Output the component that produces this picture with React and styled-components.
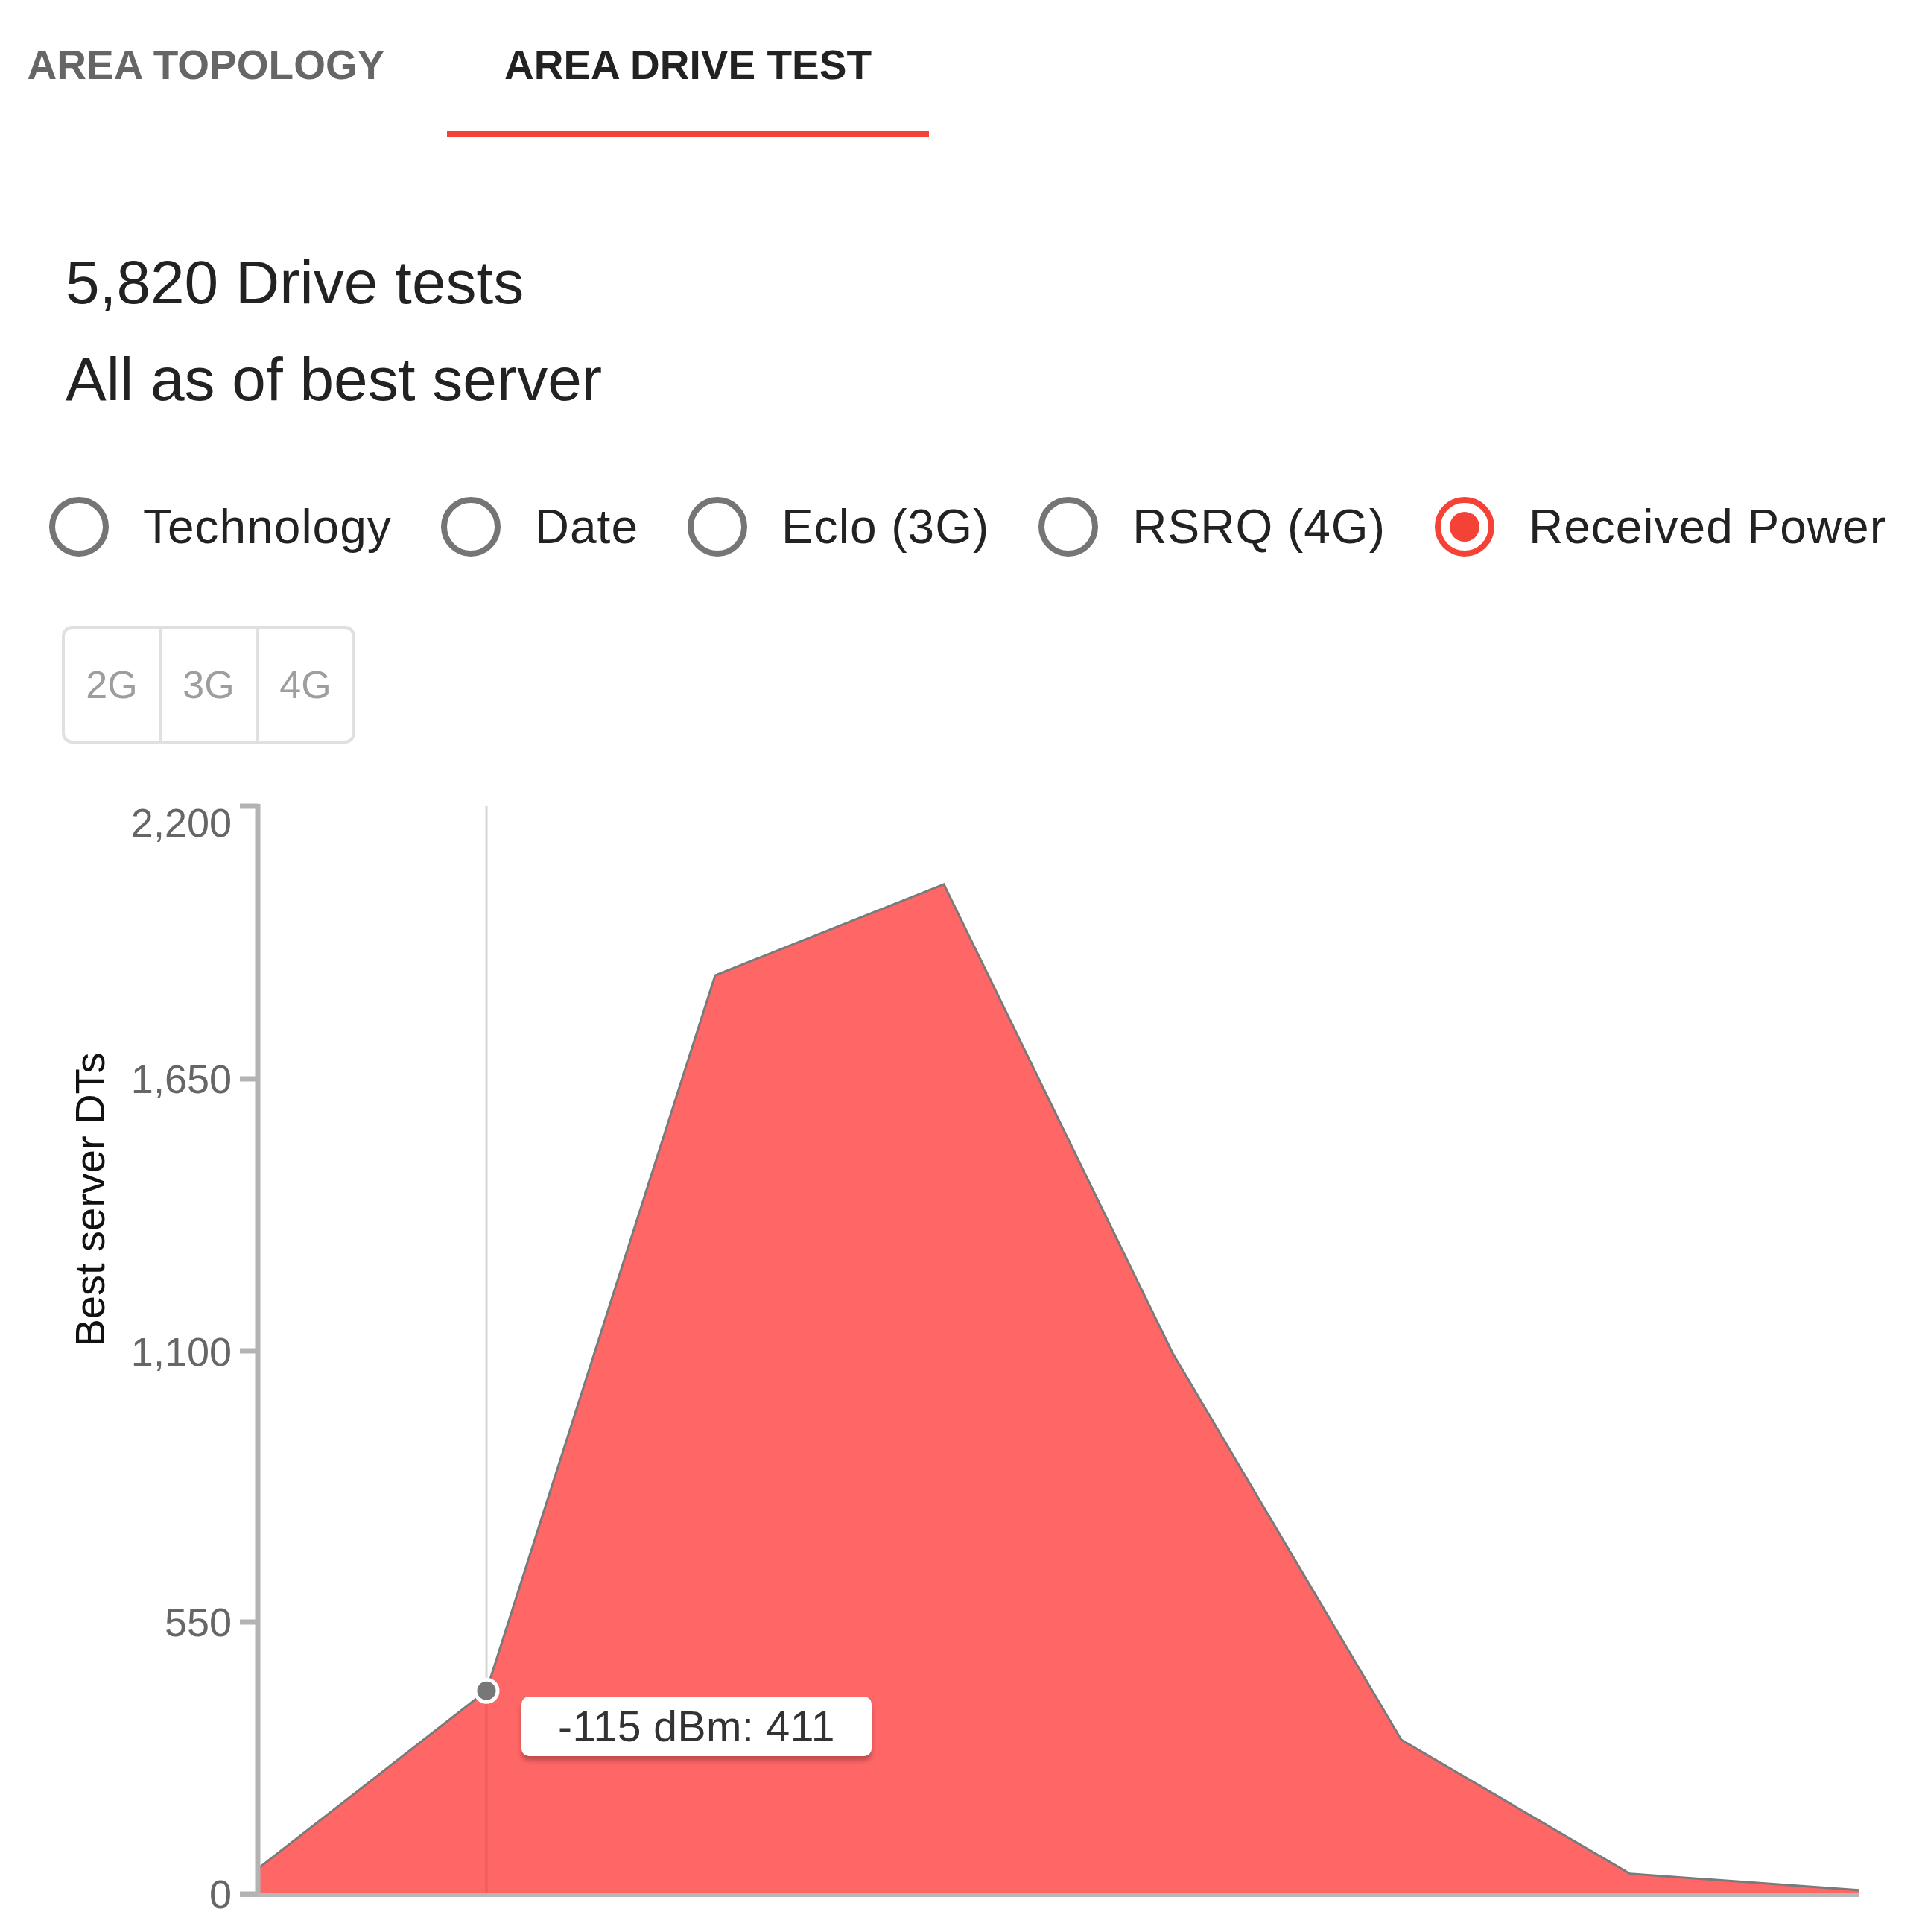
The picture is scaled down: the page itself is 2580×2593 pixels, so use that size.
import styled, { createGlobalStyle } from 'styled-components';

const GlobalStyle = createGlobalStyle`
  html, body {
    margin: 0;
    padding: 0;
    background: #fff;
  }
  body {
    font-family: "Liberation Sans", Arial, sans-serif;
  }
`;

const Page = styled.div`
  width: 2580px;
  height: 2593px;
  overflow: hidden;
  background: #fff;
`;

const TabBar = styled.div`
  display: flex;
  height: 184px;
  margin-left: -47px;
`;

const Tab = styled.div`
  position: relative;
  width: 647px;
  display: flex;
  align-items: center;
  justify-content: center;
  padding-bottom: 10px;
  box-sizing: border-box;
  font-size: 55px;
  font-weight: 700;
  text-transform: uppercase;
  color: ${(p) => (p.$active ? '#222' : '#666')};
  cursor: pointer;
`;

const Indicator = styled.span`
  position: absolute;
  left: 0;
  right: 0;
  bottom: 0;
  height: 8px;
  background: #f44336;
`;

const Summary = styled.div`
  margin-top: 130px;
  padding-left: 88px;
  font-size: 82px;
  line-height: 130px;
  color: #222;
`;

const RadioRow = styled.div`
  display: flex;
  align-items: center;
  height: 80px;
  margin-top: 93px;
  padding-left: 66px;
`;

const RadioItem = styled.label`
  display: flex;
  align-items: center;
  margin-right: 66px;
  font-size: 64px;
  letter-spacing: 1px;
  color: #222;
  white-space: nowrap;
`;

const RadioCircle = styled.span`
  width: 80px;
  height: 80px;
  box-sizing: border-box;
  border-radius: 50%;
  border: 8px solid ${(p) => (p.$checked ? '#f44336' : '#757575')};
  margin-right: 46px;
  display: flex;
  align-items: center;
  justify-content: center;
  flex-shrink: 0;
`;

const RadioDot = styled.span`
  width: 40px;
  height: 40px;
  border-radius: 50%;
  background: #f44336;
`;

const ToggleGroup = styled.div`
  display: inline-flex;
  margin: 93px 0 0 83px;
  border: 4px solid #e0e0e0;
  border-radius: 14px;
  height: 158px;
  box-sizing: border-box;
`;

const ToggleButton = styled.div`
  width: 126px;
  display: flex;
  align-items: center;
  justify-content: center;
  font-size: 52px;
  color: #9e9e9e;
  & + & {
    border-left: 4px solid #e0e0e0;
  }
`;

const ChartWrap = styled.div`
  position: relative;
  width: 2580px;
  height: 1595px;
`;

const Tooltip = styled.div`
  position: absolute;
  left: 700px;
  top: 1279px;
  width: 470px;
  height: 80px;
  display: flex;
  align-items: center;
  justify-content: center;
  background: #fff;
  border-radius: 10px;
  box-shadow: 0 6px 6px rgba(0, 0, 0, 0.25);
  font-size: 57px;
  letter-spacing: 0.5px;
  color: #333;
  white-space: nowrap;
`;

const TOP = 998;
const AXIS_X = 346;
const BASE_Y = 2542;
const STEP = 307;
const SCALE = 0.6636;
const values = [51, 411, 1858, 2042, 1094, 312, 41, 8];
const ticks = [
  { v: 2200, label: '2,200', y: 1082, ty: 1123 },
  { v: 1650, label: '1,650', y: 1448, ty: 1467 },
  { v: 1100, label: '1,100', y: 1813, ty: 1833 },
  { v: 550, label: '550', y: 2177, ty: 2196 },
  { v: 0, label: '0', y: 2542, ty: 2561 },
];

const yOf = (v) => BASE_Y - v * SCALE;
const xOf = (i) => AXIS_X + i * STEP;

const AreaChart = () => {
  const pts = values.map((v, i) => `${xOf(i)},${yOf(v)}`);
  const lastX = xOf(values.length - 1);
  const fillPath = `M${AXIS_X},${BASE_Y} L${pts.join(' L')} L${lastX},${BASE_Y} Z`;
  const linePath = `M${pts.join(' L')}`;
  const hx = xOf(1);
  const hy = yOf(values[1]);

  return (
    <ChartWrap>
      <svg width="2580" height="1595" viewBox={`0 ${TOP} 2580 1595`}>
        <text
          transform="translate(140 1610) rotate(-90)"
          textAnchor="middle"
          fontSize="56"
          fill="#111"
          fontFamily="Liberation Sans, Arial, sans-serif"
        >
          Best server DTs
        </text>
        <line x1={hx} y1={1082} x2={hx} y2={BASE_Y} stroke="#d6d6d6" strokeWidth="3" />
        <path d={fillPath} fill="#ff6666" />
        <line x1={hx} y1={hy} x2={hx} y2={BASE_Y} stroke="rgba(120,0,0,0.1)" strokeWidth="3" />
        <path d={linePath} fill="none" stroke="#7a7a7a" strokeWidth="3" />
        <line x1={AXIS_X} y1={1079} x2={AXIS_X} y2={BASE_Y + 3} stroke="#b3b3b3" strokeWidth="7" />
        <line x1={322} y1={BASE_Y + 1} x2={lastX} y2={BASE_Y + 1} stroke="#b8b8b8" strokeWidth="6" />
        {ticks.map((t) => (
          <g key={t.v}>
            <line x1={322} y1={t.y} x2={AXIS_X} y2={t.y} stroke="#b3b3b3" strokeWidth="7" />
            <text
              x={311}
              y={t.ty}
              textAnchor="end"
              fontSize="54"
              fill="#666"
              fontFamily="Liberation Sans, Arial, sans-serif"
            >
              {t.label}
            </text>
          </g>
        ))}
        <circle cx={hx} cy={hy} r="15" fill="#777" stroke="#fff" strokeWidth="5" />
      </svg>
      <Tooltip>-115 dBm: 411</Tooltip>
    </ChartWrap>
  );
};

const radios = [
  { label: 'Technology' },
  { label: 'Date' },
  { label: 'Eclo (3G)' },
  { label: 'RSRQ (4G)' },
  { label: 'Received Power', checked: true },
];

const App = () => (
  <Page>
    <GlobalStyle />
    <TabBar>
      <Tab>Area topology</Tab>
      <Tab $active>
        Area drive test
        <Indicator />
      </Tab>
    </TabBar>
    <Summary>
      <div>5,820 Drive tests</div>
      <div>All as of best server</div>
    </Summary>
    <RadioRow>
      {radios.map((r) => (
        <RadioItem key={r.label}>
          <RadioCircle $checked={r.checked}>{r.checked && <RadioDot />}</RadioCircle>
          {r.label}
        </RadioItem>
      ))}
    </RadioRow>
    <ToggleGroup>
      <ToggleButton>2G</ToggleButton>
      <ToggleButton>3G</ToggleButton>
      <ToggleButton>4G</ToggleButton>
    </ToggleGroup>
    <AreaChart />
  </Page>
);

export default App;
